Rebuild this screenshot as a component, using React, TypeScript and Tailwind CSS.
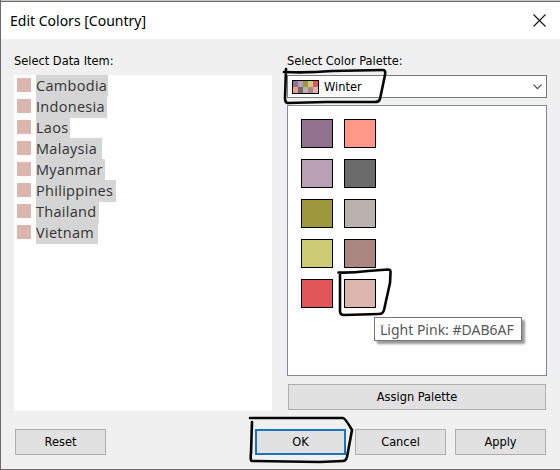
import type { ReactNode } from "react";

const ITEMS = [
  { name: "Cambodia", width: 72 },
  { name: "Indonesia", width: 71 },
  { name: "Laos", width: 34 },
  { name: "Malaysia", width: 66 },
  { name: "Myanmar", width: 69 },
  { name: "Philippines", width: 80 },
  { name: "Thailand", width: 63 },
  { name: "Vietnam", width: 62 },
];

const PALETTE = [
  "#90728f", "#b9a0b4", "#9d983d", "#cecb76", "#e15759",
  "#ff9888", "#6b6b6b", "#bab2ae", "#aa8780", "#dab6af",
];

function Button({ children, primary = false, className = "" }: { children: ReactNode; primary?: boolean; className?: string }) {
  return (
    <button
      className={`flex h-[26px] items-center justify-center bg-[#e1e1e1] ${primary ? "border-2 border-[#1874bd]" : "border border-[#adadad]"} ${className}`}
    >
      {children}
    </button>
  );
}

function Tooltip() {
  return (
    <div className="absolute left-[86px] top-[211px] flex h-6 w-[148px] items-center whitespace-nowrap border border-[#767676] bg-white pl-[5px] font-['Noto_Sans','Open_Sans',sans-serif] text-[14px] text-[#575757] shadow-[3px_3px_2px_rgba(0,0,0,0.4)]">
      Light Pink: #DAB6AF
    </div>
  );
}

function InkMarks() {
  return (
    <svg className="pointer-events-none absolute -left-px top-0" width="560" height="470" fill="none" stroke="#050505" strokeWidth="2.6" strokeLinecap="round" strokeLinejoin="round">
      <path d="M284 72Q307 73 332 71L383 70Q386 70 385 75L380 99Q379 102 375 102L326 102L288 103Q285 103 285 98L286 69" />
      <path d="M338.5 272.5Q351 273 368 271L388 269.5Q391 269.5 390.5 273L390 283L384 310Q383 314 379 314L344 315Q340 315 340 311L340 274" />
      <path d="M250 418L343 418Q345 418 352 430L347 457Q346 461 343 461L320 462L252 461Q250 461 251 453L252 422" />
    </svg>
  );
}

export default function App() {
  return (
    <div className="relative flex h-[470px] w-[560px] flex-col overflow-hidden border-b border-l border-[#6c6a6b] bg-[#f0f0f0] font-['DejaVu_Sans_Condensed','DejaVu_Sans',sans-serif] text-[12.7px] text-black">
      <div className="h-[2px] shrink-0 border-b border-[#6b6b6b] bg-[#c9c9c9]" />
      <header className="flex h-[37px] shrink-0 items-center justify-between bg-white pl-[9px] pr-[14px]">
        <h1 className="font-['Noto_Sans','Open_Sans',sans-serif] text-[14px]">Edit Colors [Country]</h1>
        <svg width="13" height="13" viewBox="0 0 13 13" stroke="#111" strokeWidth="1.1">
          <path d="M.5 .5 12.5 12.5M12.5 .5 .5 12.5" />
        </svg>
      </header>
      <main className="flex shrink-0 justify-between pl-[13px] pr-[13px] pt-3">
        <section className="w-[258px]">
          <h2 className="h-6 leading-[20px]">Select Data Item:</h2>
          <ul className="h-[336px] bg-white font-['Open_Sans','Noto_Sans',sans-serif] text-[14.5px] tracking-[0.3px] text-[#333]">
            {ITEMS.map((item) => (
              <li key={item.name} className="flex h-[21px] items-start pl-[3px]">
                <span className="mt-[3px] size-[14px] bg-[#dab6af]" />
                <span className="ml-[5px] h-[22px] whitespace-nowrap bg-[#d5d5d5] leading-[21px]" style={{ width: item.width }}>
                  {item.name}
                </span>
              </li>
            ))}
          </ul>
        </section>
        <section className="w-[260px]">
          <h2 className="h-6 leading-[20px]">Select Color Palette:</h2>
          <div className="flex h-[23px] items-center border border-[#7a7a7a] bg-white pl-1 pr-[4px]">
            <div className="grid h-[14px] w-[27px] grid-cols-5 border border-black">
              {PALETTE.map((color) => (
                <span key={color} style={{ backgroundColor: color }} />
              ))}
            </div>
            <span className="ml-[5px] pt-px">Winter</span>
            <svg className="ml-auto" width="9" height="6" viewBox="0 0 9 6" fill="none" stroke="#444" strokeWidth="1.1">
              <path d="M.5 .7 4.5 4.7 8.5 .7" />
            </svg>
          </div>
          <div className="relative mt-[7px] h-[271px] border border-[#828790] bg-white pl-[13px] pt-[13px]">
            <div className="grid w-fit grid-flow-col grid-cols-[32px_32px] grid-rows-[repeat(5,29px)] gap-x-[11px] gap-y-[11px]">
              {PALETTE.map((color) => (
                <span key={color} className="border border-black" style={{ backgroundColor: color }} />
              ))}
            </div>
            <Tooltip />
          </div>
          <Button className="ml-px mt-2 w-[258px]">Assign Palette</Button>
        </section>
      </main>
      <footer className="mt-[18px] flex shrink-0 pl-[14px]">
        <Button className="w-[91px]">Reset</Button>
        <div className="ml-[149px] flex gap-[9px]">
          <Button primary className="w-[91px]">OK</Button>
          <Button className="w-[91px]">Cancel</Button>
          <Button className="w-[91px]">Apply</Button>
        </div>
      </footer>
      <InkMarks />
    </div>
  );
}
